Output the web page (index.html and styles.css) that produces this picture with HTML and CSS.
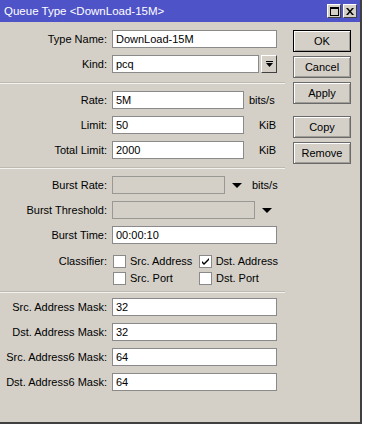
FILE: index.html
```html
<!DOCTYPE html>
<html lang="en">

<head>
    <meta charset="UTF-8">
    <title>Queue Type &lt;DownLoad-15M&gt;</title>
    <link rel="stylesheet" href="styles.css">
</head>

<body>
    <div class="window">
        <div class="titlebar">
            <span class="title">Queue Type &lt;DownLoad-15M&gt;</span>
            <div class="title-btns">
                <div class="tb-btn"><span class="max-box"></span></div>
                <div class="tb-btn">
                    <svg width="8" height="7" viewBox="0 0 8 7"><path d="M0 0h2l2 2.5L6 0h2L5 3.5 8 7H6L4 4.5 2 7H0l3-3.5z" fill="#000"/></svg>
                </div>
            </div>
        </div>

        <div class="content">
            <div class="form">
                <div class="section first">
                    <div class="row">
                        <div class="label">Type Name:</div>
                        <div class="cell"><div class="field">DownLoad-15M</div></div>
                    </div>
                    <div class="row">
                        <div class="label">Kind:</div>
                        <div class="cell">
                            <div class="field">pcq</div>
                            <div class="drop-btn">
                                <svg width="7" height="7" viewBox="0 0 7 7"><rect x="0" y="0" width="7" height="1" fill="#000"/><path d="M0 2h7L3.5 6z" fill="#000"/></svg>
                            </div>
                        </div>
                    </div>
                </div>

                <div class="section">
                    <div class="row">
                        <div class="label">Rate:</div>
                        <div class="cell">
                            <div class="field short">5M</div>
                            <div class="unit">bits/s</div>
                        </div>
                    </div>
                    <div class="row">
                        <div class="label">Limit:</div>
                        <div class="cell">
                            <div class="field short">50</div>
                            <div class="unit right">KiB</div>
                        </div>
                    </div>
                    <div class="row">
                        <div class="label">Total Limit:</div>
                        <div class="cell">
                            <div class="field short">2000</div>
                            <div class="unit right">KiB</div>
                        </div>
                    </div>
                </div>

                <div class="section burst-section">
                    <div class="row">
                        <div class="label">Burst Rate:</div>
                        <div class="cell">
                            <div class="field disabled burst"></div>
                            <div class="arrow"></div>
                            <div class="unit">bits/s</div>
                        </div>
                    </div>
                    <div class="row">
                        <div class="label">Burst Threshold:</div>
                        <div class="cell">
                            <div class="field disabled"></div>
                            <div class="arrow"></div>
                        </div>
                    </div>
                    <div class="row">
                        <div class="label">Burst Time:</div>
                        <div class="cell"><div class="field">00:00:10</div></div>
                    </div>
                    <div class="classifier">
                        <div class="label">Classifier:</div>
                        <div class="checks">
                            <div class="check"><span class="box"></span>Src. Address</div>
                            <div class="check"><span class="box checked">
                                <svg width="9" height="9" viewBox="0 0 9 9"><path d="M1 4l2 2 5-5v2L3 8 1 6z" fill="#000"/></svg>
                            </span>Dst. Address</div>
                            <div class="check"><span class="box"></span>Src. Port</div>
                            <div class="check"><span class="box"></span>Dst. Port</div>
                        </div>
                    </div>
                </div>

                <div class="section masks">
                    <div class="row">
                        <div class="label">Src. Address Mask:</div>
                        <div class="cell"><div class="field">32</div></div>
                    </div>
                    <div class="row">
                        <div class="label">Dst. Address Mask:</div>
                        <div class="cell"><div class="field">32</div></div>
                    </div>
                    <div class="row">
                        <div class="label">Src. Address6 Mask:</div>
                        <div class="cell"><div class="field">64</div></div>
                    </div>
                    <div class="row">
                        <div class="label">Dst. Address6 Mask:</div>
                        <div class="cell"><div class="field">64</div></div>
                    </div>
                </div>
            </div>

            <div class="buttons">
                <div class="btn default">OK</div>
                <div class="btn">Cancel</div>
                <div class="btn">Apply</div>
                <div class="btn spaced">Copy</div>
                <div class="btn">Remove</div>
            </div>
        </div>
    </div>
</body>

</html>
```

FILE: styles.css
```css
body {
    margin: 0;
    background: #ffffff;
    font-family: "Liberation Sans", Arial, sans-serif;
    font-size: 11px;
    color: #000;
}

.window {
    width: 360px;
    height: 422px;
    background: #d4d0c8;
    border-right: 2px solid #404040;
    border-bottom: 2px solid #404040;
    display: flex;
    flex-direction: column;
}

.titlebar {
    height: 22px;
    background: #4f53c8;
    display: flex;
    align-items: center;
    justify-content: space-between;
    padding: 0 3px 0 4px;
}

.title {
    color: #fff;
    font-size: 11.5px;
}

.title-btns {
    display: flex;
    gap: 2px;
}

.tb-btn {
    width: 12px;
    height: 12px;
    background: #d4d0c8;
    border: 1px solid #404040;
    border-top-color: #fff;
    border-left-color: #fff;
    display: flex;
    align-items: center;
    justify-content: center;
}

.max-box {
    width: 7px;
    height: 6px;
    border: 1px solid #000;
    border-top-width: 2px;
}

.content {
    flex: 1;
    display: flex;
}

.form {
    width: 285px;
}

.section {
    border-top: 1px solid #bdbab2;
    box-shadow: inset 0 1px 0 #f4f2ee;
    padding: 8px 0 8px;
    display: flex;
    flex-direction: column;
    gap: 7px;
}

.section.first {
    border-top: none;
    box-shadow: none;
    padding-bottom: 9px;
}

.section.burst-section {
    padding-bottom: 6px;
}

.section.masks {
    padding-top: 6px;
}

.row {
    display: flex;
    align-items: center;
    height: 18px;
}

.label {
    width: 107px;
    padding-right: 5px;
    text-align: right;
    white-space: nowrap;
}

.cell {
    width: 165px;
    display: flex;
    align-items: center;
}

.field {
    flex: 1;
    height: 16px;
    line-height: 16px;
    background: #fff;
    border: 1px solid #8a8a8a;
    padding: 0 3px;
}

.field.short {
    flex: none;
    width: 124px;
}

.field.burst {
    flex: none;
    width: 105px;
}

.field.disabled {
    background: #d4d0c8;
    border-color: #9a9892;
}

.unit {
    margin-left: 5px;
}

.unit.right {
    flex: 1;
    text-align: right;
    margin-right: 1px;
}

.drop-btn {
    width: 14px;
    height: 16px;
    margin-left: 2px;
    background: #d4d0c8;
    border: 1px solid #404040;
    border-top-color: #fff;
    border-left-color: #fff;
    display: flex;
    align-items: center;
    justify-content: center;
}

.arrow {
    width: 0;
    height: 0;
    margin: 0 5px 0 7px;
    border-left: 5px solid transparent;
    border-right: 5px solid transparent;
    border-top: 5px solid #000;
}

.classifier {
    display: flex;
    margin-top: 3px;
}

.classifier .label {
    line-height: 14px;
}

.checks {
    display: grid;
    grid-template-columns: 86px 80px;
    row-gap: 3px;
}

.check {
    display: flex;
    align-items: center;
    height: 14px;
    white-space: nowrap;
}

.box {
    width: 11px;
    height: 11px;
    background: #fff;
    border: 1px solid #8a8a8a;
    margin: 0 4px 0 1px;
    display: flex;
    align-items: center;
    justify-content: center;
}

.buttons {
    padding: 8px 0 0 8px;
    display: flex;
    flex-direction: column;
    gap: 4px;
}

.btn {
    width: 56px;
    height: 20px;
    line-height: 20px;
    text-align: center;
    border: 1px solid #6a6a6a;
    box-shadow: inset 1px 1px 0 #fff, inset -1px -1px 0 #a09d96;
}

.btn.default {
    border-color: #000;
}

.btn.spaced {
    margin-top: 8px;
}
```
